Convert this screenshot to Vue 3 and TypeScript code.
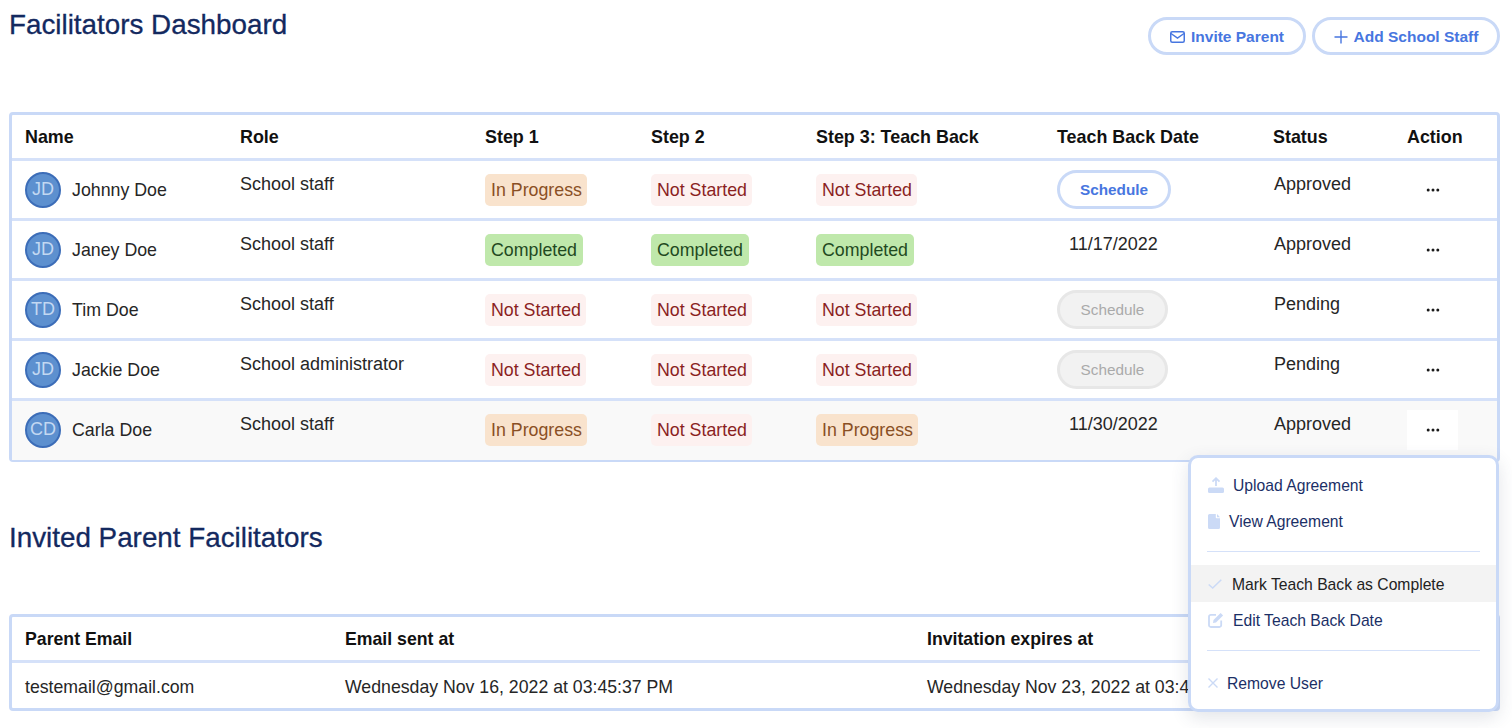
<script setup lang="ts">
type Step = 'In Progress' | 'Not Started' | 'Completed'
interface Person {
  initials: string
  name: string
  role: string
  steps: Step[]
  date?: string
  schedule?: 'active' | 'disabled'
  status: string
  open?: boolean
}
const headers = ['Name', 'Role', 'Step 1', 'Step 2', 'Step 3: Teach Back', 'Teach Back Date', 'Status', 'Action']
const people: Person[] = [
  { initials: 'JD', name: 'Johnny Doe', role: 'School staff', steps: ['In Progress', 'Not Started', 'Not Started'], schedule: 'active', status: 'Approved' },
  { initials: 'JD', name: 'Janey Doe', role: 'School staff', steps: ['Completed', 'Completed', 'Completed'], date: '11/17/2022', status: 'Approved' },
  { initials: 'TD', name: 'Tim Doe', role: 'School staff', steps: ['Not Started', 'Not Started', 'Not Started'], schedule: 'disabled', status: 'Pending' },
  { initials: 'JD', name: 'Jackie Doe', role: 'School administrator', steps: ['Not Started', 'Not Started', 'Not Started'], schedule: 'disabled', status: 'Pending' },
  { initials: 'CD', name: 'Carla Doe', role: 'School staff', steps: ['In Progress', 'Not Started', 'In Progress'], date: '11/30/2022', status: 'Approved', open: true },
]
const badgeClass = (s: Step): string => s.toLowerCase().replace(' ', '-')
</script>

<template>
  <div class="page">
    <header class="top">
      <h1 class="title">Facilitators Dashboard</h1>
      <div class="actions">
        <button class="pill invite">
          <svg width="15" height="12" viewBox="0 0 15 12" fill="none" stroke="currentColor" stroke-width="1.500">
            <rect x=".75" y=".75" width="13.500" height="10.500" rx="1.500" />
            <path d="M1 2.500 7.500 7 14 2.500" />
          </svg>
          Invite Parent
        </button>
        <button class="pill add">
          <svg width="14" height="14" viewBox="0 0 14 14" fill="none" stroke="currentColor" stroke-width="1.400">
            <path d="M7 .5v13M.5 7h13" />
          </svg>
          Add School Staff
        </button>
      </div>
    </header>

    <section class="table">
      <div class="row head">
        <div v-for="h in headers" :key="h">{{ h }}</div>
      </div>
      <div v-for="p in people" :key="p.name" class="row body" :class="{ hover: p.open }">
        <div class="who">
          <span class="avatar">{{ p.initials }}</span>
          <span class="person">{{ p.name }}</span>
        </div>
        <div class="raised">{{ p.role }}</div>
        <div v-for="(s, i) in p.steps" :key="i">
          <span class="badge" :class="badgeClass(s)">{{ s }}</span>
        </div>
        <div v-if="p.date" class="raised date">{{ p.date }}</div>
        <div v-else>
          <button class="schedule" :class="p.schedule">Schedule</button>
        </div>
        <div class="raised status">{{ p.status }}</div>
        <div>
          <span class="more" :class="{ on: p.open }">
            <svg width="14" height="4" viewBox="0 0 14 4" fill="#1a1a1a">
              <circle cx="2.200" cy="2" r="1.500" /><circle cx="7" cy="2" r="1.500" /><circle cx="11.800" cy="2" r="1.500" />
            </svg>
          </span>
        </div>
      </div>
    </section>

    <h2 class="title second">Invited Parent Facilitators</h2>

    <section class="table invited">
      <div class="row head inv">
        <div>Parent Email</div>
        <div>Email sent at</div>
        <div>Invitation expires at</div>
      </div>
      <div class="row inv inv-body">
        <div>testemail@gmail.com</div>
        <div>Wednesday Nov 16, 2022 at 03:45:37 PM</div>
        <div>Wednesday Nov 23, 2022 at 03:4</div>
      </div>
    </section>

    <aside class="menu">
      <div class="item">
        <svg class="ic" width="16" height="16" viewBox="0 0 16 16" fill="none">
          <path d="M8 9V1.200M4.500 4.600 8 1.200l3.500 3.400" stroke="#cbdaf6" stroke-width="1.800" />
          <rect x="0" y="10.500" width="16" height="5.500" rx="1.500" fill="#cbdaf6" />
        </svg>
        <span class="gap-upload">Upload Agreement</span>
      </div>
      <div class="item">
        <svg class="ic" width="12" height="15" viewBox="0 0 12 15" fill="#cbdaf6">
          <path d="M1.500 0H7.800v3.500a.8.8 0 0 0 .8.800H12v9.200a1.500 1.500 0 0 1-1.500 1.500h-9A1.500 1.500 0 0 1 0 13.500v-12A1.500 1.500 0 0 1 1.500 0z" />
          <path d="M9 0l3 3.200H9z" />
        </svg>
        <span class="gap-view">View Agreement</span>
      </div>
      <div class="rule"></div>
      <div class="item lit">
        <svg class="ic" width="14" height="10" viewBox="0 0 14 10" fill="none" stroke="#cbdaf6" stroke-width="1.500">
          <path d="M.7 5.500 4.700 9 13.300.7" />
        </svg>
        <span class="gap-mark">Mark Teach Back as Complete</span>
      </div>
      <div class="item">
        <svg class="ic" width="16" height="16" viewBox="0 0 16 16" fill="none">
          <path d="M8 2.800H2.800A1.800 1.800 0 0 0 1 4.600v8.600A1.800 1.800 0 0 0 2.800 15h8.600a1.800 1.800 0 0 0 1.800-1.800V8.500" stroke="#cbdaf6" stroke-width="1.800" />
          <path d="M5.500 8 12.600.9l2.500 2.500L8 10.500l-3 .5z" fill="#cbdaf6" />
        </svg>
        <span class="gap-upload">Edit Teach Back Date</span>
      </div>
      <div class="rule lower"></div>
      <div class="item">
        <svg class="ic" width="10" height="10" viewBox="0 0 10 10" fill="none" stroke="#cbdaf6" stroke-width="1.400">
          <path d="M.5.500l9 9M9.500.500l-9 9" />
        </svg>
        <span class="gap-remove">Remove User</span>
      </div>
    </aside>
  </div>
</template>

<style>
html, body { margin: 0; background: #fff; overflow: hidden; }
</style>

<style scoped>
.page {
  position: relative;
  width: 1512px;
  height: 728px;
  box-sizing: border-box;
  padding: 0 12px 0 9px;
  overflow: hidden;
  font-family: "Liberation Sans", Arial, sans-serif;
  font-size: 17.8px;
  color: #262626;
}
.top {
  display: flex;
  justify-content: space-between;
  align-items: flex-start;
  height: 112px;
}
.title {
  margin: 0;
  font-size: 27.8px;
  font-weight: 400;
  line-height: 30px;
  color: #13295f;
  -webkit-text-stroke: 0.3px #13295f;
}
.top .title { padding-top: 10px; }
.actions { display: flex; gap: 6px; padding-top: 17px; }
.pill {
  display: flex;
  align-items: center;
  justify-content: center;
  gap: 6px;
  height: 38px;
  box-sizing: border-box;
  border: 3px solid #c9d9f7;
  border-radius: 19px;
  background: #fff;
  color: #4776e0;
  font: 700 15.5px "Liberation Sans", Arial, sans-serif;
  padding: 1px 0 0;
}
.invite { width: 158px; }
.add { width: 188px; }

.table {
  box-sizing: border-box;
  border: 3px solid #c9d9f7;
  border-radius: 4px;
  background: #fff;
  height: 350px;
}
.row {
  display: grid;
  grid-template-columns: 215px 245px 166px 165px 241px 216px 134px 1fr;
  padding-left: 13px;
  align-items: center;
  box-sizing: border-box;
}
.head {
  height: 46px;
  font-weight: 700;
  font-size: 17.9px;
  color: #111;
  border-bottom: 3px solid #d5e1f9;
  padding-top: 1px;
}
.body {
  height: 60px;
  border-bottom: 3px solid #d5e1f9;
}
.body:last-child { border-bottom: 0; height: 59px; padding-bottom: 2px; }
.hover { background: #f9f9f9; }
.who { display: flex; align-items: center; gap: 11px; }
.person { padding-top: 2px; }
.avatar {
  width: 36px;
  height: 36px;
  box-sizing: border-box;
  border: 2px solid #3c6db8;
  border-radius: 50%;
  background: #5d90cf;
  color: #c3d8f2;
  display: flex;
  align-items: center;
  justify-content: center;
  font-size: 18px;
}
.raised { padding-bottom: 10px; font-size: 18px; }
.status { padding-left: 1px; }
.date { padding-left: 12px; }
.badge {
  display: inline-block;
  padding: 6px 5.5px 6px 6px;
  border-radius: 5px;
  line-height: 20px;
}
.in-progress { background: #f9e3cd; color: #8a4f24; }
.not-started { background: #fdf1f0; color: #8b1f1f; }
.completed { background: #bfe8ab; color: #1f4a1f; }
.schedule {
  display: block;
  box-sizing: border-box;
  height: 39px;
  border-radius: 20px;
  font: 15.3px "Liberation Sans", Arial, sans-serif;
  padding: 0;
}
.active {
  width: 114px;
  background: #fff;
  border: 3px solid #c9d9f7;
  color: #4776e0;
  font-weight: 700;
}
.disabled {
  width: 111px;
  background: #f2f2f2;
  border: 3px solid #e7e7e7;
  color: #aaa;
}
.more {
  display: flex;
  width: 51px;
  height: 40px;
  align-items: center;
  justify-content: center;
}
.more.on { background: #fff; }

.second { padding-top: 61px; height: 91px; box-sizing: content-box; margin-bottom: 0; }
.invited { height: 97px; font-size: 17.7px; }
.invited .head { font-size: 17.7px; }
.inv { grid-template-columns: 320px 582px 1fr; }
.inv-body { height: 48px; white-space: nowrap; }

.menu {
  position: absolute;
  left: 1188px;
  top: 455px;
  width: 311px;
  height: 257px;
  box-sizing: border-box;
  border: 3px solid #c9d9f7;
  border-radius: 10px;
  background: #fff;
  box-shadow: 0 6px 18px rgba(60, 70, 100, 0.14);
  font-size: 15.7px;
  color: #1b2f66;
  padding-top: 9px;
}
.item {
  display: flex;
  align-items: center;
  height: 36px;
  padding-left: 17px;
}
.item span { padding-top: 2px; }
.ic { flex: none; }
.gap-upload { margin-left: 9px; }
.gap-view { margin-left: 9px; }
.gap-mark { margin-left: 10px; }
.gap-remove { margin-left: 9px; }
.rule { height: 1px; background: #d5e1f9; margin: 12px 16px 13px; }
.rule.lower { margin: 12px 16px 14px; }
.lit { background: #f3f3f3; color: #222; height: 37px; }
</style>
